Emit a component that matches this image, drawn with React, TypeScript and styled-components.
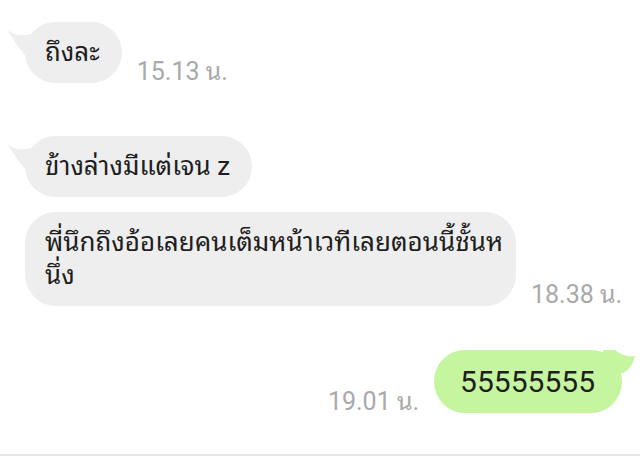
import { createGlobalStyle } from 'styled-components';
import styled from 'styled-components';

const Global = createGlobalStyle`
  html, body {
    margin: 0;
    padding: 0;
    background: #ffffff;
  }
  body {
    font-family: Roboto, "Noto Sans Thai Looped", sans-serif;
    color: #1e1e1e;
  }
`;

const Screen = styled.div`
  width: 640px;
  height: 456px;
  box-sizing: border-box;
  border-bottom: 2px solid #e7e7e7;
  display: flex;
  flex-direction: column;
  overflow: hidden;
`;

const Row = styled.div<{ $mine?: boolean; $gap: number }>`
  display: flex;
  align-items: flex-end;
  flex-direction: ${(p) => (p.$mine ? 'row-reverse' : 'row')};
  justify-content: flex-start;
  gap: 15px;
  margin-top: ${(p) => p.$gap}px;
  padding: ${(p) => (p.$mine ? '0 18px 0 0' : '0 0 0 25px')};
`;

const Bubble = styled.div<{ $mine?: boolean; $width?: number }>`
  position: relative;
  box-sizing: border-box;
  background: ${(p) => (p.$mine ? '#c6f5a0' : '#eeeeee')};
  border-radius: 31px;
  padding: ${(p) => (p.$mine ? '14px 27px 14px 26px' : '14px 22px 14px 20px')};
  font-size: ${(p) => (p.$mine ? 30 : 26)}px;
  line-height: ${(p) => (p.$mine ? 35 : 33)}px;
  width: ${(p) => (p.$width ? `${p.$width}px` : 'auto')};
  white-space: pre;
  color: #1e1e1e;
`;

const Tail = styled.svg<{ $mine?: boolean }>`
  position: absolute;
  top: 0;
  width: 40px;
  height: 40px;
  ${(p) => (p.$mine ? 'right: -15px;' : 'left: -18px;')}
`;

const Time = styled.span`
  display: block;
  font-size: 25px;
  line-height: 1;
  color: #a9a9a9;
  white-space: nowrap;
  margin-bottom: -1px;
`;

function BubbleTail({ mine, color }: { mine?: boolean; color: string }) {
  return (
    <Tail $mine={mine} viewBox="0 0 40 40">
      {mine ? (
        <path d="M38 6 Q34 22 22 24 L10 34 L6 0 L18 0 Q28 8 38 6 Z" fill={color} />
      ) : (
        <path d="M0 8 Q10 16 24 12 L30 30 L22 38 Q10 24 0 8 Z" fill={color} />
      )}
    </Tail>
  );
}

type Msg = {
  text: string;
  time: string;
  mine?: boolean;
  tail?: boolean;
  gap: number;
  width?: number;
};

const messages: Msg[] = [
  { text: 'ถึงละ', time: '15.13 น.', tail: true, gap: 22 },
  { text: 'ข้างล่างมีแต่เจน z', time: '', tail: true, gap: 53 },
  {
    text: 'พี่นึกถึงอ้อเลยคนเต็มหน้าเวทีเลยตอนนี้ชั้นห\nนึ่ง',
    time: '18.38 น.',
    gap: 15,
    width: 491,
  },
  { text: '55555555', time: '19.01 น.', mine: true, tail: true, gap: 44 },
];

export default function App() {
  return (
    <>
      <Global />
      <Screen>
        {messages.map((m, i) => (
          <Row key={i} $mine={m.mine} $gap={m.gap}>
            <Bubble $mine={m.mine} $width={m.width}>
              {m.tail && <BubbleTail mine={m.mine} color={m.mine ? '#c6f5a0' : '#eeeeee'} />}
              {m.text}
            </Bubble>
            {m.time && <Time>{m.time}</Time>}
          </Row>
        ))}
      </Screen>
    </>
  );
}
